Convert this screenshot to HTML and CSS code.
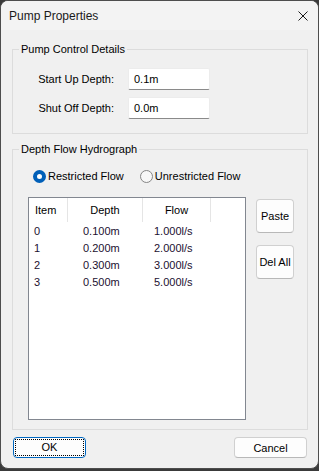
FILE: index.html
```html
<!DOCTYPE html>
<html lang="en">
  <head>
    <meta charset="utf-8" />
    <link rel="stylesheet" href="styles.css">
  </head>
  <body>
    <div class="window">
      <div class="titlebar">
        <span class="title">Pump Properties</span>
        <svg class="close" width="10" height="10" viewBox="0 0 10 10">
          <path d="M0.5 0.5 L9.5 9.5 M9.5 0.5 L0.5 9.5" stroke="#1a1a1a" stroke-width="1" fill="none" />
        </svg>
      </div>

      <div class="content">
        <fieldset class="group controls">
          <legend>Pump Control Details</legend>
          <div class="formGrid">
            <label>Start Up Depth:</label>
            <div class="textBox">0.1m</div>
            <label>Shut Off Depth:</label>
            <div class="textBox">0.0m</div>
          </div>
        </fieldset>

        <fieldset class="group hydro">
          <legend>Depth Flow Hydrograph</legend>
          <div class="hydroBody">
            <div class="radios">
              <span class="radio"><span class="dot checked"></span>Restricted Flow</span>
              <span class="radio"><span class="dot"></span>Unrestricted Flow</span>
            </div>
            <div class="listRow">
              <div class="list">
                <div class="row head">
                  <span class="cItem">Item</span>
                  <span class="cMid">Depth</span>
                  <span class="cMid">Flow</span>
                  <span class="cRest"></span>
                </div>
                <div class="row">
                  <span class="cItem">0</span><span class="cDepth">0.100m</span><span class="cFlow">1.000l/s</span>
                </div>
                <div class="row">
                  <span class="cItem">1</span><span class="cDepth">0.200m</span><span class="cFlow">2.000l/s</span>
                </div>
                <div class="row">
                  <span class="cItem">2</span><span class="cDepth">0.300m</span><span class="cFlow">3.000l/s</span>
                </div>
                <div class="row">
                  <span class="cItem">3</span><span class="cDepth">0.500m</span><span class="cFlow">5.000l/s</span>
                </div>
              </div>
              <div class="sideButtons">
                <button class="btn tall">Paste</button>
                <button class="btn tall">Del All</button>
              </div>
            </div>
          </div>
        </fieldset>

        <div class="footer">
          <button class="btn wide default"><span class="focus">OK</span></button>
          <button class="btn wide">Cancel</button>
        </div>
      </div>
    </div>
  </body>
</html>
```

FILE: styles.css
```css
html, body {
  margin: 0;
  padding: 0;
}
body {
  width: 319px;
  height: 471px;
  background-color: #3a3a3a;
  font-family: "Liberation Sans", Arial, sans-serif;
  font-size: 11px;
  color: #000;
}
.window {
  box-sizing: border-box;
  width: 319px;
  height: 469px;
  background-color: #f0f0f0;
  border: 1px solid #4d4d4d;
  border-radius: 8px;
  overflow: hidden;
}
.titlebar {
  height: 29px;
  background-color: #f3f3f3;
  display: flex;
  align-items: center;
  justify-content: space-between;
  padding: 0 10px 0 8px;
}
.title {
  font-size: 12px;
  color: #1a1a1a;
  padding-top: 1px;
}
.close {
  display: block;
}
.content {
  padding: 11px 10px 0 11px;
}
.group {
  margin: 0;
  border: 1px solid #dcdcdc;
  padding: 0;
}
.group legend {
  padding: 0 2px;
  margin-left: 6px;
  line-height: 16px;
}
.controls {
  padding: 11px 0 14px 0;
}
.formGrid {
  display: grid;
  grid-template-columns: 101px 82px;
  column-gap: 14px;
  row-gap: 7px;
  align-items: center;
}
.formGrid label {
  text-align: right;
}
.textBox {
  box-sizing: border-box;
  height: 22px;
  line-height: 21px;
  background-color: #fff;
  border: 1px solid #ececec;
  border-bottom-color: #8a8a8a;
  border-radius: 2px;
  padding-left: 5px;
}
.hydro {
  margin-top: 7px;
}
.hydroBody {
  padding: 11px 0 9px 15px;
}
.radios {
  display: flex;
  gap: 16px;
  line-height: 16px;
  padding-left: 5px;
}
.radio {
  display: flex;
  align-items: center;
  gap: 2px;
}
.dot {
  box-sizing: border-box;
  width: 13px;
  height: 13px;
  border-radius: 50%;
  border: 1px solid #858585;
  background-color: #f7f7f7;
  display: inline-block;
}
.dot.checked {
  border: 4px solid #005fb8;
  background-color: #fff;
}
.listRow {
  display: flex;
  margin-top: 13px;
}
.list {
  box-sizing: border-box;
  width: 218px;
  height: 223px;
  background-color: #fff;
  border: 1px solid #828790;
}
.row {
  display: grid;
  grid-template-columns: 39px 75px 68px 1fr;
  height: 17px;
  line-height: 17px;
  color: #1c1030;
}
.row.head {
  height: 24px;
  line-height: 24px;
  color: #000;
  margin-bottom: 1px;
}
.head span {
  border-right: 1px solid #e5e5e5;
}
.head .cRest {
  border-right: none;
}
.cItem {
  padding-left: 5px;
}
.head .cItem {
  padding-left: 6px;
}
.cMid {
  text-align: center;
}
.cDepth {
  padding-left: 15px;
}
.cFlow {
  padding-left: 11px;
}
.sideButtons {
  display: flex;
  flex-direction: column;
  gap: 12px;
  margin: 2px 0 0 10px;
}
.btn {
  box-sizing: border-box;
  font-family: inherit;
  font-size: 11px;
  color: #000;
  background-color: #fdfdfd;
  border: 1px solid #d0d0d0;
  border-bottom-color: #b8b8b8;
  border-radius: 4px;
  padding: 0;
  cursor: pointer;
}
.tall {
  width: 38px;
  height: 34px;
}
.footer {
  display: flex;
  justify-content: space-between;
  margin: 7px 1px 0 1px;
}
.wide {
  width: 73px;
  height: 21px;
}
.default {
  border: 1px solid #0067c0;
  padding: 1px;
}
.focus {
  display: block;
  height: 100%;
  box-sizing: border-box;
  border: 1px dotted #000;
  line-height: 15px;
}
```
